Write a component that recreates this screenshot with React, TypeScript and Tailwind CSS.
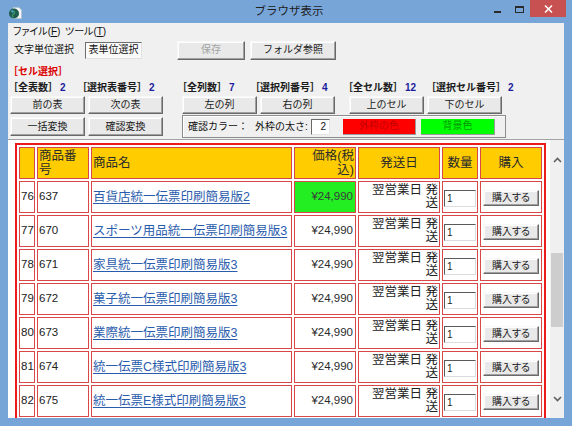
import React from "react";

const rows: [string, string, string][] = [
  ["76", "637", "百貨店統一伝票印刷簡易版2"],
  ["77", "670", "スポーツ用品統一伝票印刷簡易版3"],
  ["78", "671", "家具統一伝票印刷簡易版3"],
  ["79", "672", "菓子統一伝票印刷簡易版3"],
  ["80", "673", "業際統一伝票印刷簡易版3"],
  ["81", "674", "統一伝票C様式印刷簡易版3"],
  ["82", "675", "統一伝票E様式印刷簡易版3"],
];

function AppIcon() {
  return (
    <svg width="14" height="12" viewBox="0 0 14 12">
      <path d="M5 0.5h6l2.5 2.5v8.5h-8.5z" fill="#f4f4f4" stroke="#b8c4cc" strokeWidth="0.6" />
      <circle cx="6" cy="6.5" r="5" fill="#1f5c4e" />
      <path d="M3 4.5c1.5-1 3-0.5 3.5 0.5s-0.5 2 -1.5 2.5s-0.5 2 0.5 2.8" fill="none" stroke="#3d9a6a" strokeWidth="1.2" />
      <circle cx="4.5" cy="4.5" r="1.2" fill="#4fa8d8" opacity="0.8" />
    </svg>
  );
}

function Btn({ children, className, disabled }: { children: React.ReactNode; className: string; disabled?: boolean }) {
  return (
    <div
      className={
        "flex items-center justify-center bg-[#e9e9e9] border border-t-[#f8f8f8] border-l-[#f8f8f8] border-r-[#696969] border-b-[#696969] shadow-[inset_-1px_-1px_0_#a0a0a0,inset_1px_1px_0_#ffffff] " +
        (disabled ? "text-[#a3a3a3] " : "text-[#1a1a1a] ") +
        className
      }
    >
      {children}
    </div>
  );
}

function Label({ name, value, className }: { name: string; value: string; className: string }) {
  return (
    <div className={"font-bold whitespace-nowrap " + className}>
      <span className="text-[#1a1a1a]">［{name}］</span>
      <span className="text-[#1c1c9c] ml-[2px]">{value}</span>
    </div>
  );
}

function Scrollbar() {
  return (
    <div className="w-[14px] shrink-0 bg-[#f0f0f0] flex flex-col items-center">
      <div className="h-[17px] shrink-0" />
      <svg width="9" height="6" viewBox="0 0 9 6" className="shrink-0">
        <path d="M1 5L4.5 1.5L8 5" fill="none" stroke="#606060" strokeWidth="1.6" />
      </svg>
      <div className="h-[90px] shrink-0" />
      <div className="w-[12px] h-[74px] shrink-0 bg-[#cdcdcd]" />
      <div className="h-[69px] shrink-0" />
      <svg width="9" height="6" viewBox="0 0 9 6" className="shrink-0">
        <path d="M1 1L4.5 4.5L8 1" fill="none" stroke="#606060" strokeWidth="1.6" />
      </svg>
    </div>
  );
}

const cell = "border border-[#d84848] flex items-center overflow-hidden";
const head = cell + " bg-[#ffcc00] text-[12.5px] leading-[14px] text-[#2a2a2a]";

export default function App() {
  return (
    <div className="w-[572px] h-[426px] bg-[#78a5d8] flex flex-col overflow-hidden font-['Liberation_Sans','Noto_Sans_CJK_JP',sans-serif] text-black">
      {/* title bar */}
      <div className="h-[23px] shrink-0 grid grid-cols-[1fr_auto_1fr]">
        <div className="flex items-center pl-[8px] pt-[2px]">
          <AppIcon />
        </div>
        <div className="flex items-center text-[11.5px] text-[#1e1e1e] pl-[6px]">ブラウザ表示</div>
        <div className="flex justify-end items-start">
          <svg width="40" height="17" viewBox="0 0 40 17">
            <rect x="4" y="11" width="7" height="2" fill="#2a2a2a" />
            <rect x="25.5" y="6.5" width="8" height="6" fill="none" stroke="#2a2a2a" strokeWidth="1" />
            <rect x="25" y="6" width="9" height="2" fill="#2a2a2a" />
          </svg>
          <div className="w-[36px] h-[17px] bg-[#c75050] mr-[6px] flex items-center justify-center">
            <svg width="9" height="8" viewBox="0 0 9 8">
              <path d="M1 0.5L8 7.5M8 0.5L1 7.5" stroke="#ffffff" strokeWidth="1.5" />
            </svg>
          </div>
        </div>
      </div>

      {/* client */}
      <div className="flex-1 min-h-0 mx-[8px] mb-[8px] bg-[#f0f0f0] flex flex-col text-[10px] leading-none">
        {/* menu */}
        <div className="h-[17px] shrink-0 flex items-center pl-[5px] [font-feature-settings:'palt'] text-[#111]">
          <span className="w-[52px]">
            ファイル(<span className="underline">F</span>)
          </span>
          <span>
            ツール(<span className="underline">T</span>)
          </span>
        </div>

        {/* row 2 */}
        <div className="h-[20px] shrink-0 flex items-center">
          <span className="w-[77px] pl-[6px] text-[#111]">文字単位選択</span>
          <div className="w-[57px] h-[17px] flex items-center justify-center bg-[#fbfbfb] border border-t-[#6e6e6e] border-l-[#6e6e6e] border-r-[#e0e0e0] border-b-[#e0e0e0] text-[#111]">
            表単位選択
          </div>
          <Btn className="w-[68px] h-[19px] ml-[35px]" disabled>
            保存
          </Btn>
          <Btn className="w-[86px] h-[19px] ml-[5px]">フォルダ参照</Btn>
        </div>

        {/* cell select title */}
        <div className="h-[14px] mt-[5px] shrink-0 flex items-center font-bold text-[#dd0000]">
          <span>［セル選択］</span>
        </div>

        {/* labels */}
        <div className="h-[14px] mt-[2px] shrink-0 flex items-center">
          <Label name="全表数" value="2" className="w-[69px]" />
          <Label name="選択表番号" value="2" className="w-[100px]" />
          <Label name="全列数" value="7" className="w-[73px]" />
          <Label name="選択列番号" value="4" className="w-[93px]" />
          <Label name="全セル数" value="12" className="w-[83px]" />
          <Label name="選択セル番号" value="2" className="" />
        </div>

        {/* buttons row */}
        <div className="h-[18px] mt-[1px] shrink-0 flex items-stretch pl-[2px] gap-[3px]">
          <Btn className="w-[75px]">前の表</Btn>
          <Btn className="w-[75px]">次の表</Btn>
          <Btn className="w-[75px] ml-[16px]">左の列</Btn>
          <Btn className="w-[75px]">右の列</Btn>
          <Btn className="w-[75px] ml-[11px]">上のセル</Btn>
          <Btn className="w-[75px]">下のセル</Btn>
        </div>

        {/* row 4 */}
        <div className="h-[23px] mt-[1px] shrink-0 flex items-center pl-[2px]">
          <Btn className="w-[75px] h-[19px]">一括変換</Btn>
          <Btn className="w-[75px] h-[19px] ml-[3px]">確認変換</Btn>
          <div className="w-[324px] h-[23px] ml-[19px] border border-t-[#8c8c8c] border-l-[#8c8c8c] border-r-[#8c8c8c] border-b-[#8c8c8c] shadow-[inset_1px_1px_0_#ffffff] flex items-center text-[#111]">
            <span className="w-[72px] pl-[5px]">確認カラー：</span>
            <span className="w-[56px]">外枠の太さ:</span>
            <div className="w-[19px] h-[16px] bg-white border border-t-[#6a6a6a] border-l-[#6a6a6a] border-r-[#e4e4e4] border-b-[#e4e4e4] flex items-center justify-end pr-[3px]">
              2
            </div>
            <div className="w-[73px] h-[16px] ml-[13px] bg-[#ff0000] border-b border-r border-[#9a9a9a] flex items-center justify-center text-[#c40000]">
              外枠の色
            </div>
            <div className="w-[74px] h-[16px] ml-[5px] bg-[#00ff00] border-b border-r border-[#9a9a9a] flex items-center justify-center text-[#009a00]">
              背景色
            </div>
          </div>
        </div>

        {/* browser area */}
        <div className="flex-1 min-h-0 mt-[1px] border-t border-[#a3a3a3] bg-white flex overflow-hidden">
          <div className="flex-1 min-w-0 overflow-hidden pl-[7px] pt-[3px]">
            <div className="w-max grid grid-cols-[16px_52px_201px_62px_82px_36px_62px] auto-rows-[32px] gap-[2px] p-[2px] border-2 border-[#ec1c1c] text-[#222]">
              <div className={head} />
              <div className={head + " pl-[1px]"}>
                <span>
                  商品番
                  <br />号
                </span>
              </div>
              <div className={head + " pl-[1px]"}>商品名</div>
              <div className={head + " justify-end text-right pr-[1px]"}>
                <span>
                  価格(税
                  <br />込)
                </span>
              </div>
              <div className={head + " justify-center"}>発送日</div>
              <div className={head + " justify-center"}>数量</div>
              <div className={head + " justify-center"}>購入</div>

              {rows.map(([n, code, name], i) => (
                <React.Fragment key={n}>
                  <div className={cell + " text-[11.5px] pl-[1px]"}>{n}</div>
                  <div className={cell + " text-[11.5px] pl-[1px]"}>{code}</div>
                  <div className={cell + " text-[12.5px] pl-[1px] whitespace-nowrap"}>
                    <span className="underline text-[#2a5cad] underline-offset-2">{name}</span>
                  </div>
                  <div
                    className={
                      cell +
                      " justify-end pr-[2px] text-[11.5px] " +
                      (i === 0 ? "bg-[#22ee22] text-[#3a3a3a]" : "text-[#2a2a2a]")
                    }
                  >
                    ¥24,990
                  </div>
                  <div className={cell + " justify-end text-right pr-[1px] text-[12.5px] leading-[13px]"}>
                    <span>
                      翌営業日 発
                      <br />送
                    </span>
                  </div>
                  <div className={cell + " pl-[1px]"}>
                    <div className="w-[32px] h-[17px] mt-[3px] bg-white border border-t-[#5a5a5a] border-l-[#5a5a5a] border-r-[#dcdcdc] border-b-[#dcdcdc] flex items-center pl-[2px] text-[10px]">
                      1
                    </div>
                  </div>
                  <div className={cell + " justify-center"}>
                    <Btn className="w-[56px] h-[16px] mt-[2px] text-[10px] [font-feature-settings:'palt']">購入する</Btn>
                  </div>
                </React.Fragment>
              ))}
            </div>
          </div>
          <Scrollbar />
        </div>
      </div>
    </div>
  );
}
